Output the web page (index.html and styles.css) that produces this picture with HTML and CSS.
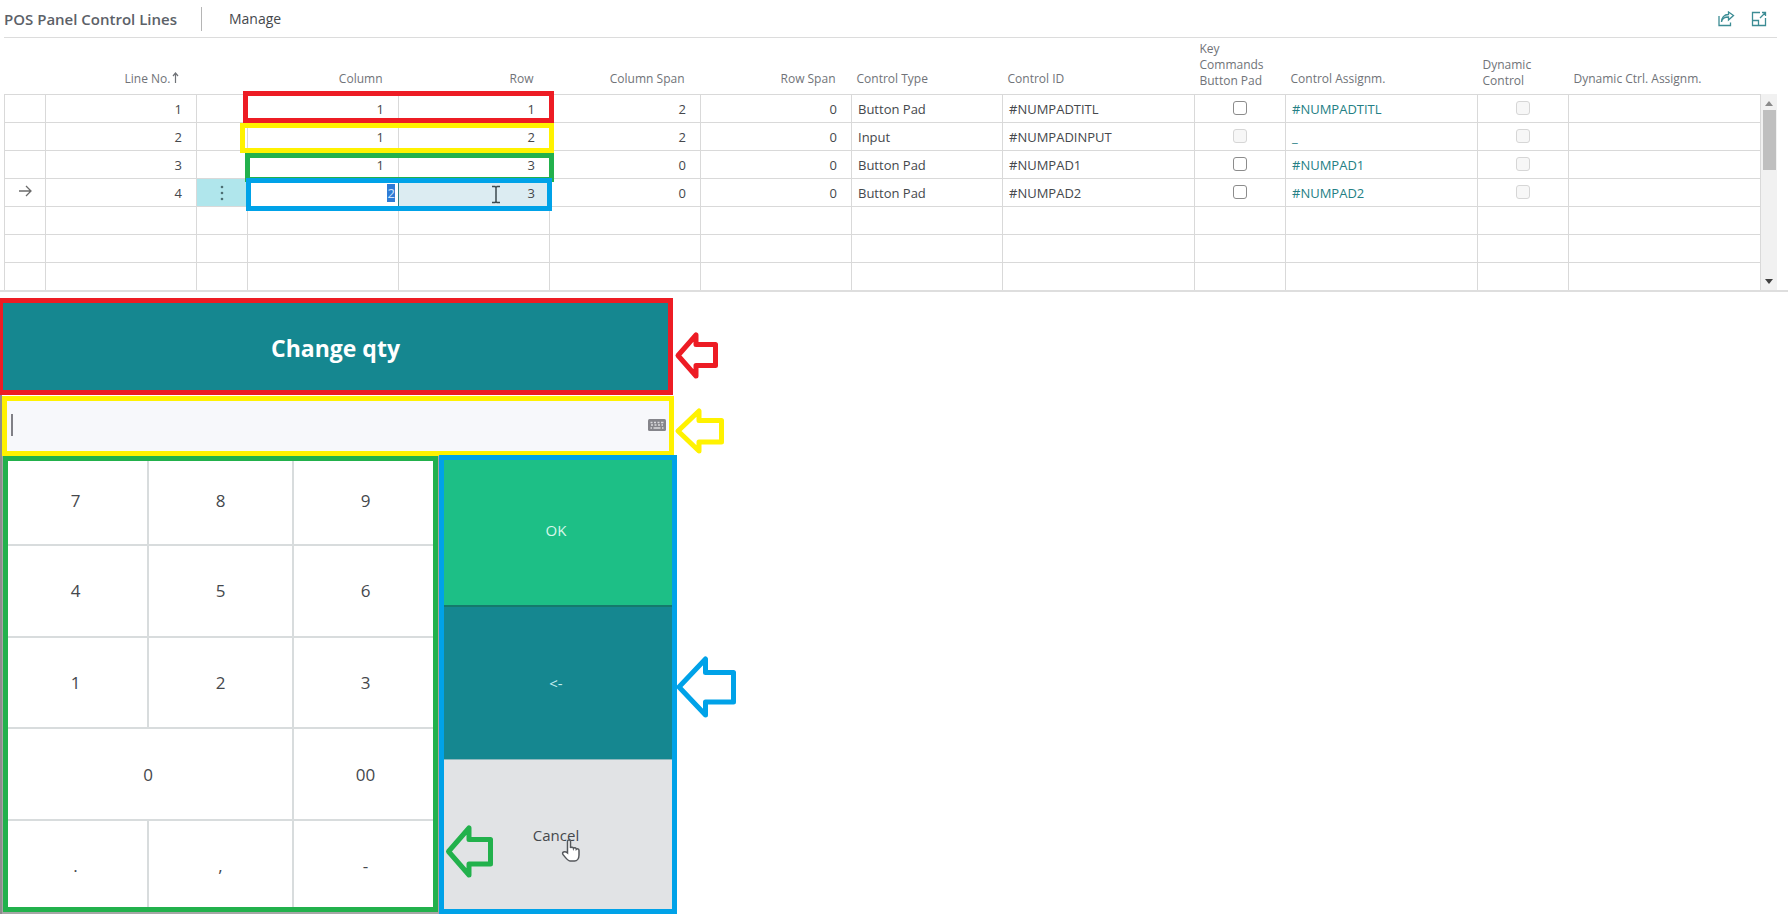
FILE: index.html
```html
<!DOCTYPE html>
<html lang="en">
<head>
<meta charset="utf-8">
<title>POS Panel Control Lines</title>
<link rel="stylesheet" href="styles.css">
</head>
<body>
<section class="lines">
  <header class="bar">
    <h1 class="bar-title">POS Panel Control Lines</h1>
    <button class="bar-tab" type="button">Manage</button>
    <div class="bar-actions">
      <button class="icon-btn" type="button" aria-label="Share">
        <svg width="18" height="16" viewBox="0 0 18 16"><path d="M2 5v9.500h11.500v-3M4.500 11C5 7.500 7.500 6 11.500 6V9l5-4.500-5-3.500v2.500C7 3.500 4.500 6.500 4.500 11z"/></svg>
      </button>
      <button class="icon-btn" type="button" aria-label="Expand">
        <svg width="16" height="16" viewBox="0 0 16 16"><path d="M9 1.500H1.500v13h13V7M1.500 9.500h6v5M9 7l5-5M11 1.500h3.500V5"/></svg>
      </button>
    </div>
  </header>

  <div class="grid-wrap">
    <table class="grid">
      <colgroup>
        <col class="c-mark"><col class="c-num"><col class="c-menu"><col class="c-num"><col class="c-num"><col class="c-num"><col class="c-num"><col class="c-num"><col class="c-id"><col class="c-check"><col class="c-id"><col class="c-check"><col class="c-id">
      </colgroup>
      <thead>
        <tr>
          <th></th><th class="num sorted">Line No.<svg class="sort" width="7" height="11" viewBox="0 0 7 11"><path d="M3.500 11V1M1 4l2.500-3L6 4"/></svg></th><th></th><th class="num">Column</th><th class="num">Row</th><th class="num">Column Span</th><th class="num">Row Span</th><th>Control Type</th><th>Control ID</th><th class="tall">Key Commands Button Pad</th><th>Control Assignm.</th><th class="tall">Dynamic Control</th><th>Dynamic Ctrl. Assignm.</th>
        </tr>
      </thead>
      <tbody>
        <tr><td></td><td class="num">1</td><td></td><td class="num">1</td><td class="num">1</td><td class="num">2</td><td class="num">0</td><td>Button Pad</td><td>#NUMPADTITL</td><td class="mid"><input type="checkbox" aria-label="Key Commands Button Pad, line 1"></td><td><a href="#">#NUMPADTITL</a></td><td class="mid"><input type="checkbox" disabled aria-label="Dynamic Control, line 1"></td><td></td></tr>
        <tr><td></td><td class="num">2</td><td></td><td class="num">1</td><td class="num">2</td><td class="num">2</td><td class="num">0</td><td>Input</td><td>#NUMPADINPUT</td><td class="mid"><input type="checkbox" disabled aria-label="Key Commands Button Pad, line 2"></td><td><a href="#">_</a></td><td class="mid"><input type="checkbox" disabled aria-label="Dynamic Control, line 2"></td><td></td></tr>
        <tr><td></td><td class="num">3</td><td></td><td class="num">1</td><td class="num">3</td><td class="num">0</td><td class="num">0</td><td>Button Pad</td><td>#NUMPAD1</td><td class="mid"><input type="checkbox" aria-label="Key Commands Button Pad, line 3"></td><td><a href="#">#NUMPAD1</a></td><td class="mid"><input type="checkbox" disabled aria-label="Dynamic Control, line 3"></td><td></td></tr>
        <tr><td class="mid"><svg class="mark" width="14" height="12" viewBox="0 0 14 12"><path d="M1 6h12M8 1l5 5-5 5"/></svg></td><td class="num">4</td><td class="menu"><button class="dots" type="button" aria-label="More options"><svg width="4" height="16" viewBox="0 0 4 16"><circle cx="2" cy="2" r="1.300"/><circle cx="2" cy="8" r="1.300"/><circle cx="2" cy="14" r="1.300"/></svg></button></td><td class="num editing"><input class="cell-input" type="text" value="2" aria-label="Column, line 4"></td><td class="num active">3</td><td class="num">0</td><td class="num">0</td><td>Button Pad</td><td>#NUMPAD2</td><td class="mid"><input type="checkbox" aria-label="Key Commands Button Pad, line 4"></td><td><a href="#">#NUMPAD2</a></td><td class="mid"><input type="checkbox" disabled aria-label="Dynamic Control, line 4"></td><td></td></tr>
        <tr><td></td><td></td><td></td><td></td><td></td><td></td><td></td><td></td><td></td><td></td><td></td><td></td><td></td></tr>
        <tr><td></td><td></td><td></td><td></td><td></td><td></td><td></td><td></td><td></td><td></td><td></td><td></td><td></td></tr>
        <tr><td></td><td></td><td></td><td></td><td></td><td></td><td></td><td></td><td></td><td></td><td></td><td></td><td></td></tr>
      </tbody>
    </table>
    <div class="scroll">
      <svg width="8" height="5" viewBox="0 0 8 5"><path class="up" d="M0 5l4-5 4 5z"/></svg>
      <div class="thumb"></div>
      <svg width="8" height="5" viewBox="0 0 8 5"><path class="down" d="M0 0l4 5 4-5z"/></svg>
    </div>
  </div>
</section>

<main class="pos">
  <h2 class="pos-title">Change qty</h2>
  <div class="pos-body">
    <div class="entry">
      <span class="caret"></span>
      <input class="entry-input" type="text" aria-label="Quantity">
      <button class="kbd" type="button" aria-label="Keyboard">
        <svg width="18" height="12" viewBox="0 0 18 12"><rect width="18" height="12" rx="1.500" fill="#85858b"/><path d="M2.500 3.500h2M6 3.500h2M9.500 3.500h2M13 3.500h2.500M3 6h2M6.500 6h2M10 6h2M13.500 6h1.500M2.500 9H4M5.500 9h7M14 9h1.500" stroke="#d9d9dd" stroke-width="1.500"/></svg>
      </button>
    </div>
    <div class="pads">
      <div class="keys-back">
        <div class="keys">
          <button type="button" class="top left">7</button><button type="button" class="top">8</button><button type="button" class="top right">9</button>
          <button type="button" class="left">4</button><button type="button">5</button><button type="button" class="right">6</button>
          <button type="button" class="left">1</button><button type="button">2</button><button type="button" class="right">3</button>
          <button type="button" class="wide left">0</button><button type="button" class="right">00</button>
          <button type="button" class="bottom left">.</button><button type="button" class="bottom">,</button><button type="button" class="bottom right">-</button>
        </div>
      </div>
      <div class="actions">
        <button type="button" class="ok">OK</button>
        <button type="button" class="back">&lt;-</button>
        <button type="button" class="cancel">Cancel</button>
      </div>
    </div>
  </div>
</main>

<div class="frame frame-red"></div>
<div class="frame frame-yellow"></div>
<div class="frame frame-green"></div>
<div class="frame frame-blue"></div>

<svg class="marks" width="760" height="914" viewBox="0 0 760 914">
  <g class="arrows">
    <path stroke="#ed1c24" d="M678 355.500L696 335v9.500h19.500v21H696v10.500z"/>
    <path stroke="#fff200" d="M678 431l21-20v9.500h22.500v21.500H699v9z"/>
    <path stroke="#00a2e8" d="M679 687l26.500-28v13.500h28v29.500h-28v13z"/>
    <path stroke="#22b14c" d="M448.500 851.500L469 828v11.500h21.500V864H469v11z"/>
  </g>
  <path class="ibeam" d="M492 186.500h3l1 1 1-1h3M496 187v15M492 202.500h3l1-1 1 1h3"/>
  <path class="hand" d="M567.500 853v-11.500c0-2 3-2 3 0v6.500c.5-1.200 2.800-1 3 .5c.6-1.200 2.600-.8 2.800.8c1-1 2.700-.3 2.700 1.200v4.500c0 3.500-2 6-4.500 6h-4.500c-2 0-3.500-2-7-6.500c-1.500-2.200 1.500-4 4.500-1.500z"/>
</svg>
</body>
</html>
```

FILE: styles.css
```css
* { box-sizing: border-box; }

body {
  margin: 0;
  position: relative;
  background: #fff;
  color: #45484c;
  font-family: "Segoe UI", "Open Sans", sans-serif;
  font-size: 13px;
  overflow-x: hidden;
}

button {
  margin: 0;
  padding: 0;
  border: 0;
  background: none;
  color: inherit;
  font: inherit;
}

/* Lines part */
.lines { border-bottom: 2px solid #dedede; }

.bar {
  display: flex;
  align-items: center;
  height: 38px;
  margin: 0 11px 0 4px;
  border-bottom: 1px solid #dcdcdc;
}
.bar-title {
  margin: 0;
  padding-right: 24px;
  color: #5c6168;
  font-size: 15px;
  font-weight: 600;
  line-height: 24px;
  border-right: 1px solid #b5b5b5;
}
.bar-tab { padding-left: 27px; font-size: 14px; }
.bar-actions { display: flex; gap: 16px; margin-left: auto; padding-right: 10px; }
.icon-btn { display: flex; }
.icon-btn path { fill: none; stroke: #3c8c94; stroke-width: 1.300; }

.grid-wrap { display: flex; margin: 0 11px 0 4px; }
.grid {
  flex: 1;
  width: 100%;
  table-layout: fixed;
  border-collapse: collapse;
}
.c-mark { width: 41px; }
.c-num { width: 151px; }
.c-menu { width: 51px; }
.c-id { width: 192px; }
.c-check { width: 91px; }

.grid th {
  height: 56px;
  padding: 0 5px 7px;
  color: #707378;
  font-size: 12px;
  font-weight: 400;
  line-height: 16px;
  text-align: left;
  vertical-align: bottom;
}
.grid th.tall { padding-bottom: 5px; }
.grid th.num { padding-right: 16px; text-align: right; }
.grid th.sorted { padding-right: 18px; }
.sort { margin-left: 1px; }
.sort path { fill: none; stroke: #707378; stroke-width: 1.200; }

.grid td {
  height: 28px;
  padding: 2px 6px 0;
  border: 1px solid #d9d9d9;
  line-height: 20px;
}
.grid tbody tr:last-child td { border-bottom: 0; }
.grid td.num { padding-right: 14px; text-align: right; }
.grid .mid { padding: 0; text-align: center; }
.grid a { color: #257f85; text-decoration: none; }
.mark path { fill: none; stroke: #6b6b6b; stroke-width: 1.300; }

.grid input[type="checkbox"] {
  appearance: none;
  display: block;
  width: 14px;
  height: 14px;
  margin: 0 auto;
  border: 1px solid #8c8c8c;
  border-radius: 3px;
  background: #fff;
}
.grid input[type="checkbox"]:disabled { border-color: #d6d6d6; background: #f7f7f7; }

.grid td.menu { background: #b0e6ec; text-align: center; }
.dots { display: block; margin: 0 auto; }
.dots svg { display: block; fill: #4d6f74; }
.grid td.editing { padding-right: 3px; border-right-color: #2f7f86; }
.grid td.active { background: #dcecf2; }
.cell-input {
  display: block;
  width: 8px;
  height: 18px;
  margin-left: auto;
  padding: 0;
  border: 0;
  background: #2e7cd6;
  color: #cfe3fa;
  font: inherit;
  text-align: right;
}

.scroll {
  display: flex;
  flex-direction: column;
  align-items: center;
  width: 17px;
  margin-top: 56px;
  padding: 7px 0 6px;
  background: #f1f1f1;
}
.up { fill: #8a8a8a; }
.down { fill: #404040; }
.thumb { width: 13px; height: 60px; margin: 4px 0 auto; background: #bfbfbf; }

/* POS keypad */
.pos { width: 677px; padding-top: 6px; }
.pos-title {
  display: flex;
  align-items: center;
  justify-content: center;
  width: 673px;
  height: 97px;
  margin: 0;
  padding-top: 2px;
  border: 5px solid #ed1c24;
  border-left-width: 3px;
  background: #158790;
  color: #fff;
  font-size: 23px;
  font-weight: 700;
}
.pos-body { padding-top: 1px; border-left: 2px solid #8d8d8d; }
.entry {
  display: flex;
  align-items: center;
  width: 672px;
  height: 60px;
  padding: 0 3px 2px 4px;
  border: 5px solid #fff200;
  background: #f7f8fb;
}
.caret { width: 2px; height: 22px; background: #808086; }
.entry-input {
  flex: 1;
  height: 40px;
  border: 0;
  background: transparent;
  font: inherit;
}
.kbd { display: flex; }

.pads { display: flex; height: 458px; }
.keys-back { width: 437px; padding: 0 1px 2px; background: #a6a6a6; }
.keys {
  display: grid;
  grid-template-columns: 139px 1fr 139px;
  grid-template-rows: 83px 1fr 1fr 1fr 86px;
  gap: 2px;
  height: 456px;
  border: 5px solid #22b14c;
  background: #d8dcdd;
}
.keys button { background: #fff; font-size: 17px; }
.keys .wide { grid-column: span 2; }
.keys .left { padding-right: 4px; }
.keys .right { padding-left: 4px; }
.keys .top { padding-bottom: 4px; }
.keys .bottom { padding-top: 4px; }

.actions {
  display: grid;
  flex: 1;
  grid-template-rows: 145px 1fr 150px;
  margin-top: -1px;
  border: 5px solid #00a2e8;
}
.actions button { padding-right: 4px; font-size: 15px; }
.actions .ok { padding-bottom: 6px; background: #1dbf86; color: #d8f7ea; }
.actions .back { border-top: 2px solid #147a6c; background: #158790; color: #c4edef; }
.actions .cancel { border-top: 1px solid #8fb8bd; background: #e1e3e5; }

/* Call-out frames and arrows drawn over the page */
.frame { position: absolute; border: 5px solid; }
.frame-red { left: 243px; top: 91px; width: 311px; height: 32px; border-color: #ed1c24; }
.frame-yellow { left: 240px; top: 123px; width: 314px; height: 30px; border-color: #fff200; }
.frame-green { left: 245px; top: 153px; width: 309px; height: 29px; border-color: #22b14c; }
.frame-blue { left: 246px; top: 178px; width: 306px; height: 33px; border-color: #00a2e8; }

.marks { position: absolute; left: 0; top: 0; pointer-events: none; }
.arrows path { fill: none; stroke-width: 5; stroke-linejoin: round; }
.ibeam { fill: none; stroke: #3c4a50; stroke-width: 1.500; }
.hand { fill: #fff; stroke: #55585c; stroke-width: 1.500; }
```
